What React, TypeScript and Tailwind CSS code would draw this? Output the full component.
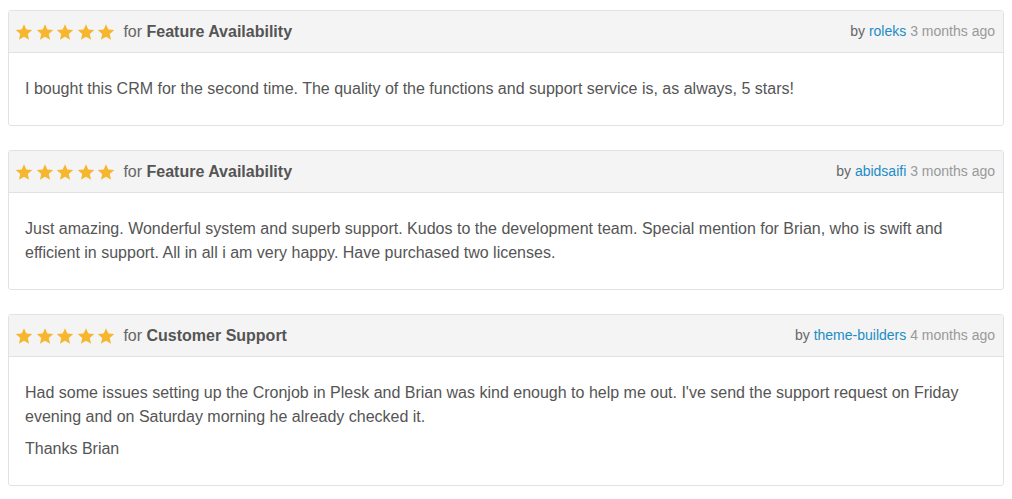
import React from 'react';

interface Review {
  id: number;
  category: string;
  author: string;
  ago: string;
  paragraphs: string[];
}

const REVIEWS: Review[] = [
  {
    id: 1,
    category: 'Feature Availability',
    author: 'roleks',
    ago: '3 months ago',
    paragraphs: [
      'I bought this CRM for the second time. The quality of the functions and support service is, as always, 5 stars!',
    ],
  },
  {
    id: 2,
    category: 'Feature Availability',
    author: 'abidsaifi',
    ago: '3 months ago',
    paragraphs: [
      'Just amazing. Wonderful system and superb support. Kudos to the development team. Special mention for Brian, who is swift and efficient in support. All in all i am very happy. Have purchased two licenses.',
    ],
  },
  {
    id: 3,
    category: 'Customer Support',
    author: 'theme-builders',
    ago: '4 months ago',
    paragraphs: [
      "Had some issues setting up the Cronjob in Plesk and Brian was kind enough to help me out. I've send the support request on Friday evening and on Saturday morning he already checked it.",
      'Thanks Brian',
    ],
  },
];

const Star = () => (
  <svg className="h-[18px] w-[18px]" viewBox="0 0 24 24" fill="#f6b72f">
    <path d="M12 1.5l3.1 7.2 7.9.7-6 5.2 1.8 7.7L12 18.2l-6.8 4.1 1.8-7.7-6-5.2 7.9-.7z" />
  </svg>
);

const ReviewCard: React.FC<{ review: Review }> = ({ review }) => (
  <div className="mb-6 overflow-hidden rounded-[3px] border border-[#dfe3e8] bg-white">
    {/* Header */}
    <div className="flex h-[42px] items-center justify-between border-b border-[#dfe3e8] bg-[#f4f4f4] pl-[6px] pr-[8px]">
      <div className="flex items-center">
        <div className="flex items-center gap-[2.6px]">
          {[0, 1, 2, 3, 4].map((i) => (
            <Star key={i} />
          ))}
        </div>
        <span className="ml-[8px] text-[16px] text-[#666]">
          for <strong className="font-bold text-[#555]">{review.category}</strong>
        </span>
      </div>
      <div className="text-[14px] text-[#666]">
        by <a href="#" className="text-[#1c8cc4]">{review.author}</a>{' '}
        <span className="text-[#999]">{review.ago}</span>
      </div>
    </div>

    {/* Body */}
    <div className="px-4 pt-[24px] pb-[24px] text-[16px] leading-6 text-[#555]">
      {review.paragraphs.map((p, i) => (
        <p key={i} className={i > 0 ? 'mt-2' : ''}>
          {p}
        </p>
      ))}
    </div>
  </div>
);

export default function App() {
  return (
    <div className="min-h-screen bg-white px-2 pt-[10px] font-['Liberation_Sans',Arial,sans-serif]">
      {REVIEWS.map((r) => (
        <ReviewCard key={r.id} review={r} />
      ))}
    </div>
  );
}
